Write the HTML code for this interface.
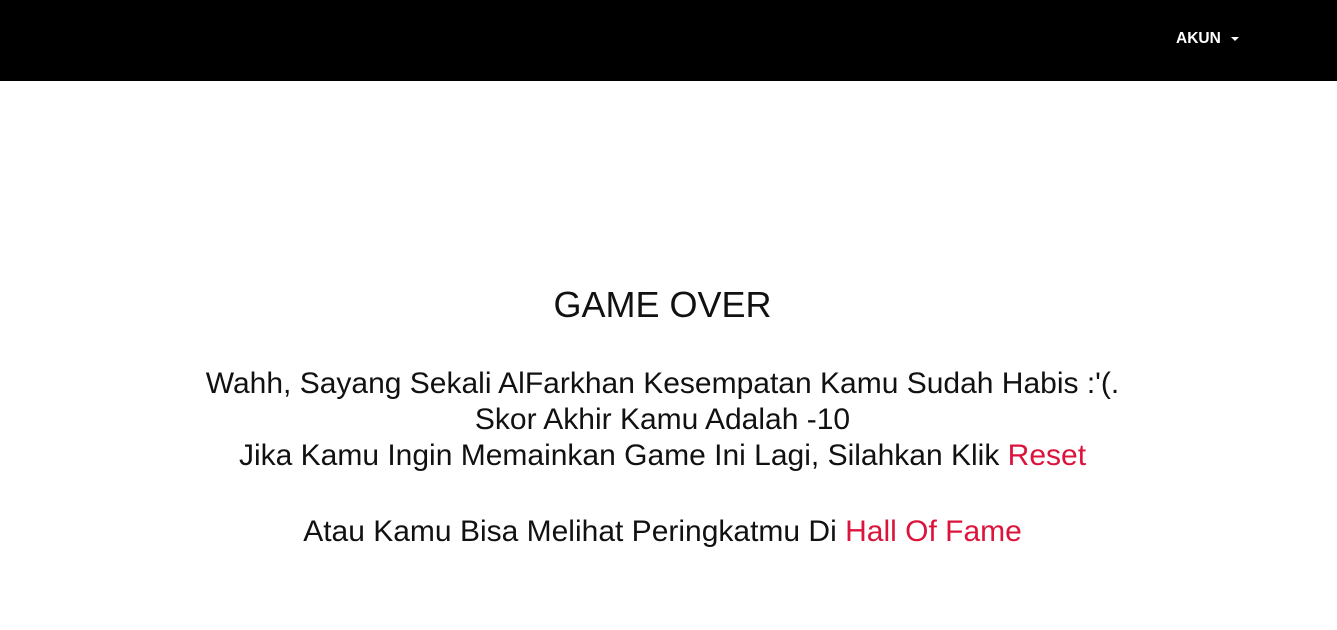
<!DOCTYPE html>
<html><head><style>
body{margin:0;width:1337px;height:630px;overflow:hidden;background:#fff;font-family:"Liberation Sans",Arial,sans-serif;}
.nav{position:absolute;left:0;top:0;width:1337px;height:81px;background:#000;}
.akun{position:absolute;left:1176px;top:30px;color:#fff;font-weight:bold;font-size:15.5px;}
.caret{position:absolute;left:1231px;top:37px;width:0;height:0;border-left:4px solid transparent;border-right:4px solid transparent;border-top:4px solid #fff;}
.c{position:absolute;left:0;width:1325px;text-align:center;color:#111;white-space:nowrap;}
.r{color:#dc143c;}
</style></head><body>
<div class="nav"><div class="akun">AKUN</div><div class="caret"></div></div>
<div class="c" style="top:285px;font-size:36px;line-height:40px;">GAME OVER</div>
<div class="c" style="top:366px;font-size:30px;line-height:36px;">Wahh, Sayang Sekali AlFarkhan Kesempatan Kamu Sudah Habis :'(.<br>Skor Akhir Kamu Adalah -10<br>Jika Kamu Ingin Memainkan Game Ini Lagi, Silahkan Klik <span class="r">Reset</span></div>
<div class="c" style="top:514px;font-size:30px;line-height:36px;">Atau Kamu Bisa Melihat Peringkatmu Di <span class="r">Hall Of Fame</span></div>
</body></html>
